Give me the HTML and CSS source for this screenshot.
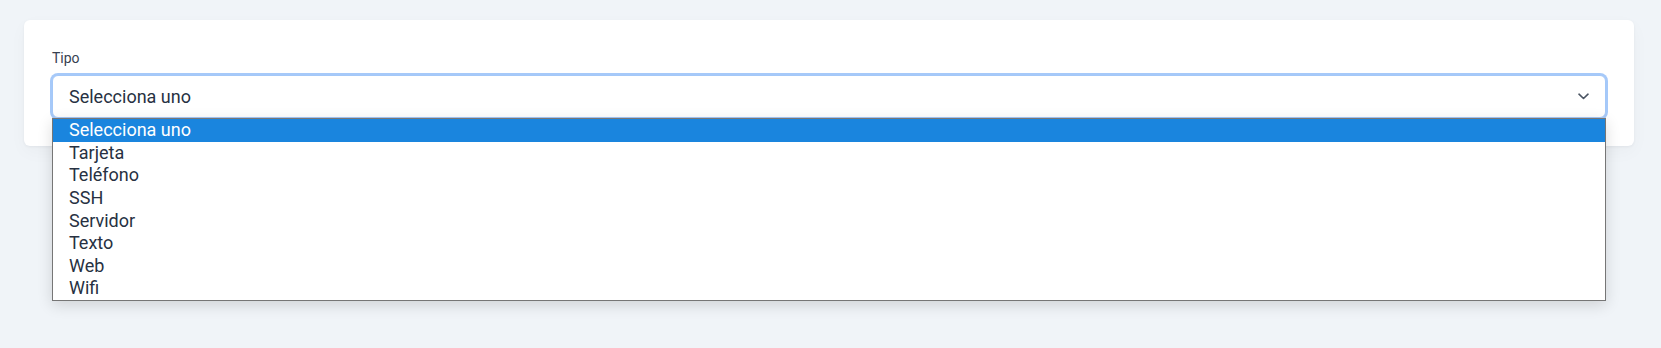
FILE: index.html
```html
<!DOCTYPE html>
<html lang="es">
<head>
<meta charset="utf-8">
<title>Tipo</title>
<link rel="stylesheet" href="styles.css">
</head>
<body>
  <div class="page">
    <div class="card">
      <div class="label">Tipo</div>
      <div class="field">
        <div class="select">
          <span class="select-value">Selecciona uno</span>
          <svg class="chevron" width="11" height="7" viewBox="0 0 11 7" aria-hidden="true">
            <polyline points="1,1.2 5.5,5.5 10,1.2" fill="none" stroke="#4b5563" stroke-width="1.6" stroke-linecap="round" stroke-linejoin="round"/>
          </svg>
        </div>
        <ul class="dropdown">
          <li class="option active">Selecciona uno</li>
          <li class="option">Tarjeta</li>
          <li class="option">Teléfono</li>
          <li class="option">SSH</li>
          <li class="option">Servidor</li>
          <li class="option">Texto</li>
          <li class="option">Web</li>
          <li class="option">Wifi</li>
        </ul>
      </div>
    </div>
  </div>
</body>
</html>
```

FILE: styles.css
```css
html, body {
  margin: 0;
  padding: 0;
  min-height: 100%;
}
html {
  height: 100%;
}
body {
  background: #f0f4f8;
  font-family: Roboto, "Liberation Sans", sans-serif;
  color: #1f2937;
}
.page {
  min-height: 348px;
  padding-top: 20px;
  box-sizing: border-box;
}
.card {
  margin: 0 27px 0 24px;
  background: #ffffff;
  border-radius: 6px;
  padding: 28px;
  box-shadow: 0 1px 3px rgba(15, 23, 42, 0.05), 0 6px 18px rgba(15, 23, 42, 0.03);
}
.label {
  font-size: 14px;
  line-height: 20px;
  color: #374151;
  margin-bottom: 7px;
}
.field {
  position: relative;
}
.select {
  box-sizing: border-box;
  height: 43px;
  border: 1px solid #a4c8f8;
  border-radius: 6px;
  box-shadow: 0 0 0 2px #a6c9f9;
  padding: 0 16px;
  display: flex;
  align-items: center;
  justify-content: space-between;
  font-size: 18px;
  color: #273142;
  background: #ffffff;
}
.chevron {
  display: block;
}
.dropdown {
  position: absolute;
  z-index: 10;
  top: 100%;
  left: 0;
  right: 0;
  margin: 0;
  padding: 0;
  list-style: none;
  background: #ffffff;
  border: 1px solid #767676;
  box-shadow: 0 4px 14px rgba(0, 0, 0, 0.14);
}
.option {
  height: 22.625px;
  line-height: 22.625px;
  padding: 0 16px;
  font-size: 18px;
  color: #273142;
  white-space: nowrap;
}
.option.active {
  background: #1a85de;
  color: #ffffff;
}
```
